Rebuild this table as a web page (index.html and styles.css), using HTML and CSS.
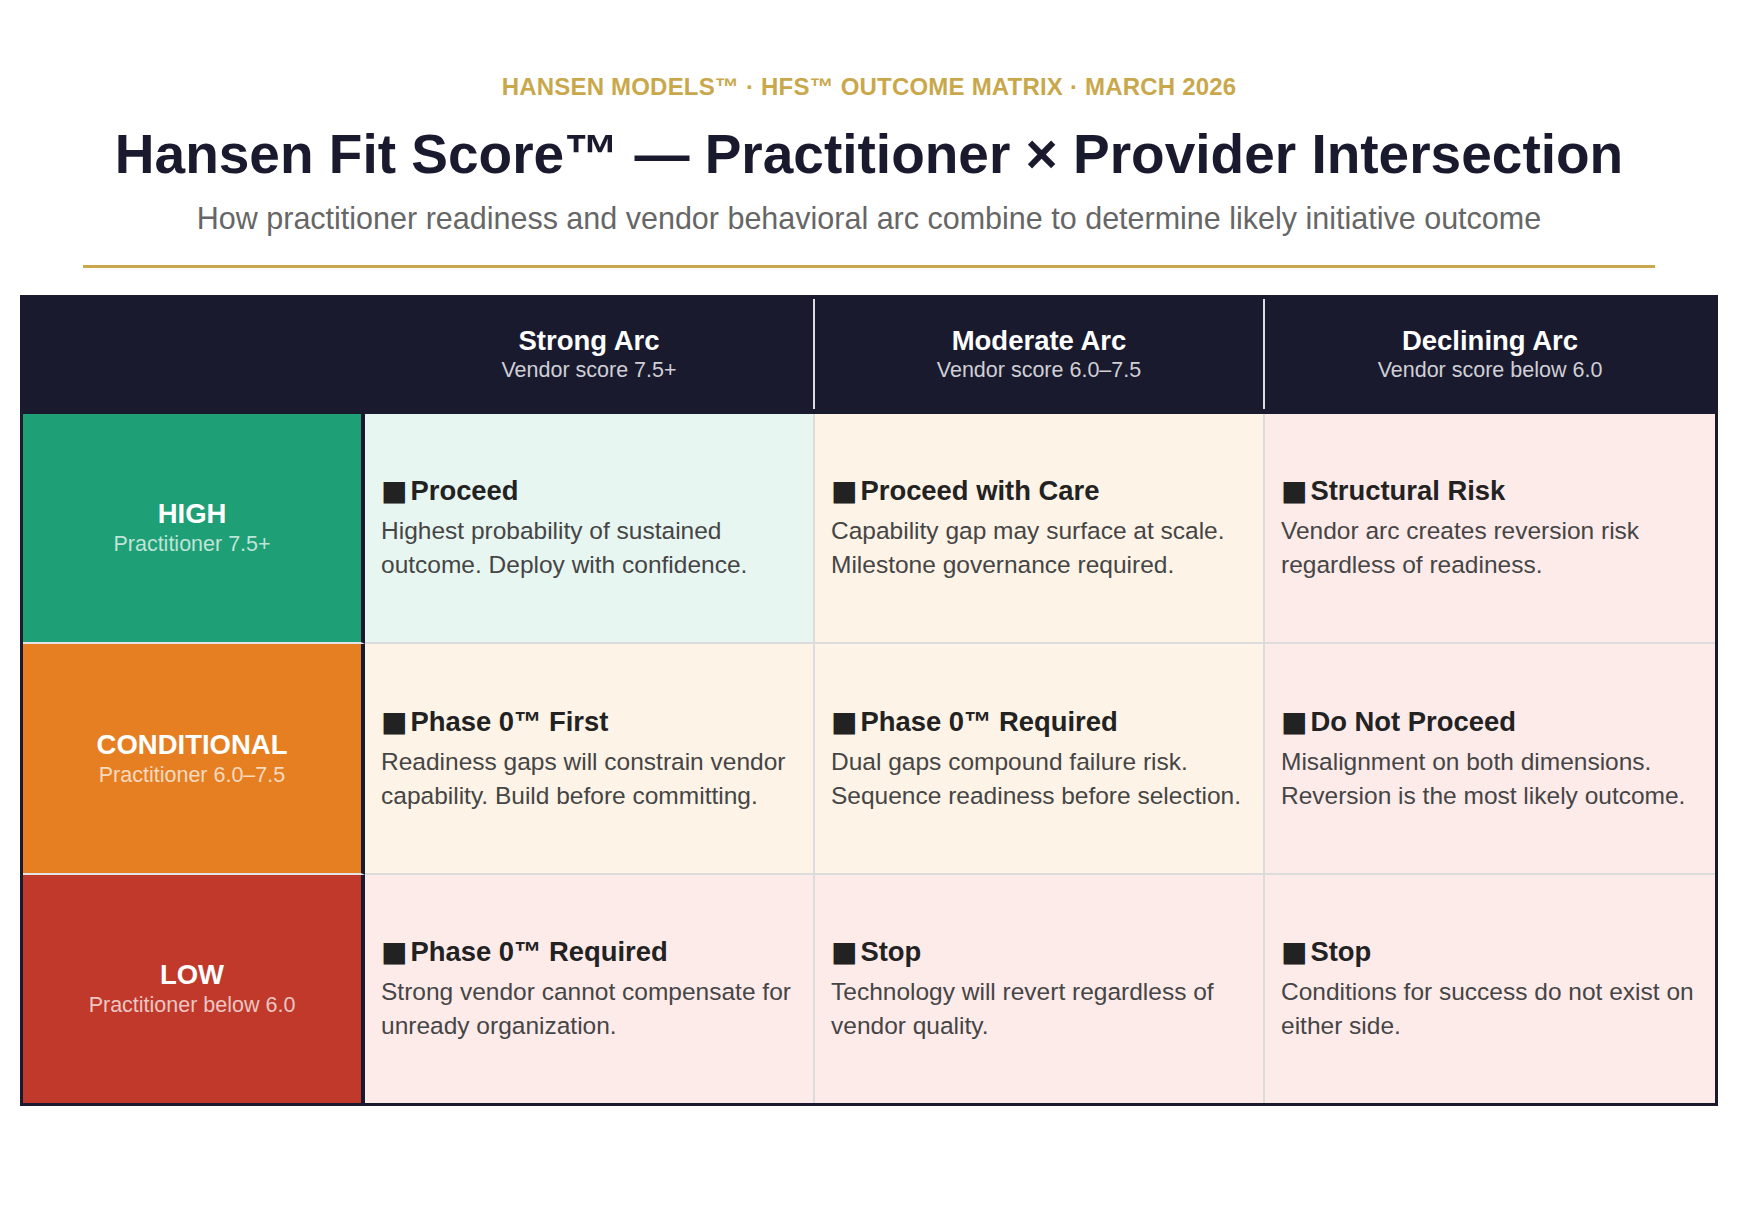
FILE: index.html
```html
<!DOCTYPE html>
<html lang="en">
<head>
<meta charset="utf-8">
<title>Hansen Fit Score — Practitioner × Provider Intersection</title>
<link rel="stylesheet" href="styles.css">
</head>
<body>
<div class="page">
  <header class="intro">
    <div class="eyebrow">HANSEN MODELS™ · HFS™ OUTCOME MATRIX · MARCH 2026</div>
    <h1 class="title">Hansen Fit Score™ — Practitioner × Provider Intersection</h1>
    <p class="subtitle">How practitioner readiness and vendor behavioral arc combine to determine likely initiative outcome</p>
    <div class="rule"></div>
  </header>

  <div class="matrix">
    <div class="corner"></div>
    <div class="colhead"><div class="ch-title">Strong Arc</div><div class="ch-sub">Vendor score 7.5+</div></div>
    <div class="colhead"><div class="ch-title">Moderate Arc</div><div class="ch-sub">Vendor score 6.0–7.5</div></div>
    <div class="colhead last"><div class="ch-title">Declining Arc</div><div class="ch-sub">Vendor score below 6.0</div></div>

    <div class="rowhead high"><div class="rh-title">HIGH</div><div class="rh-sub">Practitioner 7.5+</div></div>
    <div class="cell mint"><div class="c-title"><span class="sq">■</span>Proceed</div><div class="c-desc">Highest probability of sustained outcome. Deploy with confidence.</div></div>
    <div class="cell peach"><div class="c-title"><span class="sq">■</span>Proceed with Care</div><div class="c-desc">Capability gap may surface at scale. Milestone governance required.</div></div>
    <div class="cell pink end"><div class="c-title"><span class="sq">■</span>Structural Risk</div><div class="c-desc">Vendor arc creates reversion risk regardless of readiness.</div></div>

    <div class="rowhead cond"><div class="rh-title">CONDITIONAL</div><div class="rh-sub">Practitioner 6.0–7.5</div></div>
    <div class="cell peach"><div class="c-title"><span class="sq">■</span>Phase 0™ First</div><div class="c-desc">Readiness gaps will constrain vendor capability. Build before committing.</div></div>
    <div class="cell peach"><div class="c-title"><span class="sq">■</span>Phase 0™ Required</div><div class="c-desc">Dual gaps compound failure risk. Sequence readiness before selection.</div></div>
    <div class="cell pink end"><div class="c-title"><span class="sq">■</span>Do Not Proceed</div><div class="c-desc">Misalignment on both dimensions. Reversion is the most likely outcome.</div></div>

    <div class="rowhead low bottom"><div class="rh-title">LOW</div><div class="rh-sub">Practitioner below 6.0</div></div>
    <div class="cell pink bottom"><div class="c-title"><span class="sq">■</span>Phase 0™ Required</div><div class="c-desc">Strong vendor cannot compensate for unready organization.</div></div>
    <div class="cell pink bottom"><div class="c-title"><span class="sq">■</span>Stop</div><div class="c-desc">Technology will revert regardless of vendor quality.</div></div>
    <div class="cell pink bottom end"><div class="c-title"><span class="sq">■</span>Stop</div><div class="c-desc">Conditions for success do not exist on either side.</div></div>
  </div>
</div>
</body>
</html>
```

FILE: styles.css
```css
* { box-sizing: border-box; }

html, body {
  margin: 0;
  padding: 0;
  background: #ffffff;
}

body {
  font-family: "Liberation Sans", Arial, Helvetica, sans-serif;
  color: #1a1a2e;
}

.page {
  padding: 73px 20px 40px;
}

.intro {
  padding: 0 63px;
  text-align: center;
}

.eyebrow {
  font-size: 24px;
  line-height: 28px;
  font-weight: 700;
  color: #c9a84c;
  letter-spacing: 0.2px;
}

.title {
  margin: 21px 0 0;
  font-size: 55px;
  line-height: 64px;
  font-weight: 700;
  color: #1a1a2e;
}

.subtitle {
  margin: 15px 0 0;
  font-size: 30.5px;
  line-height: 34px;
  color: #666666;
}

.rule {
  margin-top: 30px;
  height: 3px;
  background: #c9a84c;
}

.matrix {
  margin-top: 27px;
  display: grid;
  grid-template-columns: 342px repeat(3, 1fr);
  grid-template-rows: 116px 230px 231px 228px;
  border: 3px solid #1a1a2e;
  background: #1a1a2e;
}

.corner {
  background: #1a1a2e;
}

.colhead {
  margin: 1px 0 5px;
  border-right: 2px solid #dcdcdc;
  display: flex;
  flex-direction: column;
  align-items: center;
  justify-content: center;
  color: #ffffff;
}

.colhead.last { border-right: 0; }

.ch-title {
  font-size: 27.5px;
  line-height: 32px;
  font-weight: 700;
}

.ch-sub {
  font-size: 21.5px;
  line-height: 27px;
  color: #cfcfd6;
}

.rowhead {
  border-right: 4px solid #1a1a2e;
  border-bottom: 2px solid #e4e4e4;
  display: flex;
  flex-direction: column;
  align-items: center;
  justify-content: center;
  color: #ffffff;
}

.rowhead.bottom { border-bottom: 0; }

.high { background-color: #1e9f76; background-clip: padding-box; }
.cond { background-color: #e67e22; background-clip: padding-box; }
.low  { background-color: #c0392b; background-clip: padding-box; }

.rh-title {
  font-size: 27.5px;
  line-height: 32px;
  font-weight: 700;
}

.rh-sub {
  font-size: 21.5px;
  line-height: 28px;
  color: rgba(255, 255, 255, 0.72);
}

.cell {
  border-right: 2px solid #dcdcdc;
  border-bottom: 2px solid #dcdcdc;
  padding: 0 16px;
  display: flex;
  flex-direction: column;
  justify-content: center;
}

.cell.end { border-right: 0; }
.cell.bottom { border-bottom: 0; }

.mint  { background: #e8f6f1; }
.peach { background: #fdf3e6; }
.pink  { background: #fdebea; }

.c-title {
  font-size: 27.4px;
  line-height: 34px;
  font-weight: 700;
  color: #222222;
}

.sq {
  font-family: "DejaVu Sans", sans-serif;
  font-size: 28px;
  margin-right: 3px;
}

.c-desc {
  margin-top: 6px;
  font-size: 24.5px;
  line-height: 33.6px;
  color: #454545;
}
```
